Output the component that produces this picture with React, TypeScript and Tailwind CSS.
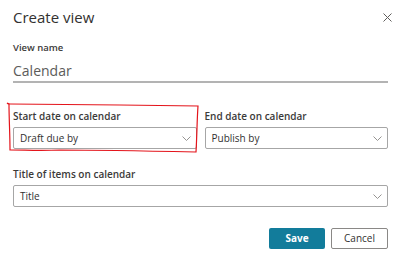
import React from "react";

const Chevron = () => (
  <svg width="9" height="5" viewBox="0 0 9 5" className="shrink-0">
    <path d="M0.5 0.5 L4.5 4.5 L8.5 0.5" fill="none" stroke="#8a8886" strokeWidth="0.9" />
  </svg>
);

const Dropdown = ({ value }: { value: string }) => (
  <div className="flex items-center justify-between h-[22px] pl-[6px] pr-[5px] border border-[#a6a6a6] rounded-[2px] bg-white">
    <span className="text-[10px] text-[#323130]">{value}</span>
    <Chevron />
  </div>
);

const Field = ({ label, value }: { label: string; value: string }) => (
  <div className="flex flex-col flex-1">
    <label className="text-[10px] leading-[14px] font-semibold text-[#3b3a39] mb-[4px]">{label}</label>
    <Dropdown value={value} />
  </div>
);

const App: React.FC = () => {
  return (
    <div
      className="relative w-[400px] h-[264px] bg-white pl-[13px] pr-[12px] pt-[7px]"
      style={{ fontFamily: '"Open Sans", "Noto Sans", sans-serif' }}
    >
      <div className="flex items-center justify-between h-[20px]">
        <h1 className="text-[15px] leading-[20px] text-[#323130]">Create view</h1>
        <svg width="9" height="9" viewBox="0 0 9 9" className="mr-[-4px]">
          <path d="M0.5 0.5 L8.5 8.5 M8.5 0.5 L0.5 8.5" stroke="#605e5c" strokeWidth="1" />
        </svg>
      </div>

      <div className="mt-[14px] text-[9.5px] leading-[14px] font-semibold text-[#3b3a39]">View name</div>
      <div className="mt-[7px] pb-[1px] border-b-2 border-[#b3b3b3]">
        <span className="block text-[14px] leading-[18px] text-[#5c5b5a]">Calendar</span>
      </div>

      <div className="flex gap-[8px] mt-[26px]">
        <Field label="Start date on calendar" value="Draft due by" />
        <Field label="End date on calendar" value="Publish by" />
      </div>

      <div className="flex mt-[18px]">
        <Field label="Title of items on calendar" value="Title" />
      </div>

      <div className="flex justify-end gap-[6px] mt-[21px]">
        <button className="w-[56px] h-[21px] bg-[#127c9b] text-white text-[10px] font-bold rounded-[2px]">
          Save
        </button>
        <button className="w-[57px] h-[21px] bg-white border border-[#8a8886] text-[#323130] text-[10px] rounded-[2px]">
          Cancel
        </button>
      </div>

      <svg className="absolute left-0 top-0 pointer-events-none" width="400" height="264">
        <path
          d="M7 103 C8 104 9 104 10 104 L120 105 L198 106 C197 120 197 135 196 152 C150 151 90 150 60 150 C40 151 25 150 10 150 C10 135 9 118 9 104"
          fill="none"
          stroke="#e4141b"
          strokeWidth="1.2"
        />
      </svg>
    </div>
  );
};

export default App;
